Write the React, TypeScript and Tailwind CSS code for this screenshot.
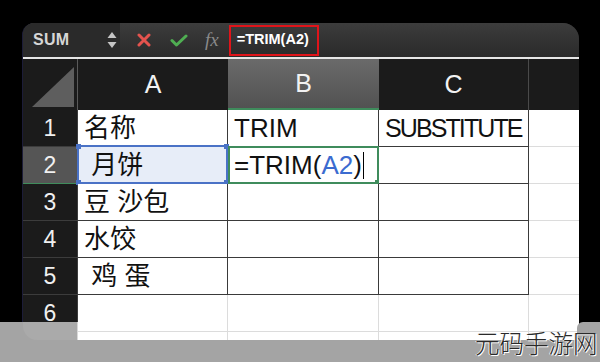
import React from 'react';

const LATIN = { fontFamily: '"Liberation Sans", Arial, sans-serif' };
const CJK = { fontFamily: '"Liberation Sans", "Noto Sans CJK SC", sans-serif' };

const DARK = 'border-r border-b border-[#3a3a3a]';
const LIGHT = 'border-r border-b border-[#dcdcdc]';

const COL_W = ['w-[150px]', 'w-[151px]', 'w-[150px]', 'w-[50px]'];

const rows: React.ReactNode[][] = [
  ['名称', 'TRIM', <span className="text-[25px] tracking-[-1.9px]">SUBSTITUTE</span>, ''],
  [' 月饼', 'formula', '', ''],
  ['豆 沙包', '', '', ''],
  ['水饺', '', '', ''],
  [' 鸡 蛋', '', '', ''],
  ['', '', '', ''],
];

function Handle({ className }: { className: string }) {
  return <span className={`absolute w-[5px] h-[5px] ${className}`} />;
}

function Toolbar() {
  return (
    <div className="h-[34px] flex items-center bg-linear-to-b from-[#3c3c3c] to-[#2a2a2a]">
      <div className="w-[97px] h-full flex items-center justify-between pl-[10px] pr-[3px] bg-[#2a2a2a]">
        <span className="text-[16px] font-semibold text-[#d6d6d6] tracking-[0.3px]" style={LATIN}>
          SUM
        </span>
        <svg width="10" height="18" viewBox="0 0 10 18">
          <path d="M5 1 L9.5 7 L0.5 7 Z" fill="#c4c4c4" />
          <path d="M5 17 L9.5 11 L0.5 11 Z" fill="#c4c4c4" />
        </svg>
      </div>
      <svg className="ml-[17px]" width="14" height="14" viewBox="0 0 14 14">
        <path d="M2 2 L12 12 M12 2 L2 12" stroke="#e4534e" strokeWidth="3" strokeLinecap="round" />
      </svg>
      <svg className="ml-[19px]" width="18" height="13" viewBox="0 0 18 13">
        <path d="M2 6.5 L6.5 11 L16 2" stroke="#4fae52" strokeWidth="3" fill="none" strokeLinecap="round" strokeLinejoin="round" />
      </svg>
      <span className="ml-[17px] text-[19px] italic text-[#8a8a8a]" style={{ fontFamily: '"Liberation Serif", serif' }}>
        fx
      </span>
      <div className="ml-[10px] w-[90px] h-[31px] border-2 border-[#e0141a] flex items-center pl-[6px]">
        <span className="text-[14.5px] font-semibold text-white" style={LATIN}>
          =TRIM(A2)
        </span>
      </div>
    </div>
  );
}

function Headers() {
  const cls = 'h-full flex items-center justify-center text-[25px] text-[#f2f2f2]';
  return (
    <div className="h-[51px] flex bg-[#1b1b1b]" style={LATIN}>
      <div className="w-[55px] h-full border-r border-[#5a5a5a] flex items-end justify-end pr-[3px] pb-[3px]">
        <svg width="42" height="40" viewBox="0 0 42 40">
          <path d="M0 40 L42 0 L42 40 Z" fill="#5e5e5e" />
        </svg>
      </div>
      <div className={`${COL_W[0]} ${cls}`}>A</div>
      <div className={`${COL_W[1]} ${cls} bg-linear-to-b from-[#6a6a6a] to-[#525252] border-b-2 border-[#3f8c5c]`}>B</div>
      <div className={`${COL_W[2]} ${cls} border-r border-[#4a4a4a]`}>C</div>
      <div className={`${COL_W[3]} ${cls}`} />
    </div>
  );
}

function CellBody({ value, c }: { value: React.ReactNode; c: number }) {
  if (value === 'formula') {
    return (
      <span className="flex items-center text-[26px] text-[#111]" style={LATIN}>
        =TRIM(<span className="text-[#3b6bd0]">A2</span>)
        <span className="ml-[1px] w-[1px] h-[27px] bg-black" />
      </span>
    );
  }
  const cjk = c === 0;
  return (
    <span className={`whitespace-pre text-[#111] text-[26px]`} style={cjk ? CJK : LATIN}>
      {value}
    </span>
  );
}

function Grid() {
  return (
    <div>
      {rows.map((row, r) => (
        <div key={r} className="h-[37px] flex">
          <div
            className={`w-[55px] h-full flex items-center justify-center text-[23px] text-[#f0f0f0] border-r border-b ${
              r === 1 ? 'bg-[#555555] border-[#3f8c5c]' : 'bg-[#1b1b1b] border-[#3c3c3c]'
            }`}
            style={LATIN}
          >
            {r + 1}
          </div>
          {row.map((value, c) => (
            <div
              key={c}
              className={`${COL_W[c]} h-full relative flex items-center pl-[6px] ${
                r < 5 && c < 3 ? DARK : LIGHT
              } ${c === 3 ? 'border-r-0' : ''} ${r === 1 && c === 0 ? 'bg-[#e7edf8]' : 'bg-white'}`}
            >
              <CellBody value={value} c={c} />
              {r === 1 && c === 0 && (
                <div className="absolute -left-px -top-[2px] -right-px -bottom-px border-2 border-[#4a72c6]">
                  <Handle className="-left-[3px] -top-[3px] bg-[#4a72c6]" />
                  <Handle className="-right-[3px] -top-[3px] bg-[#4a72c6]" />
                  <Handle className="-left-[3px] -bottom-[3px] bg-[#4a72c6]" />
                  <Handle className="-right-[3px] -bottom-[3px] bg-[#4a72c6]" />
                </div>
              )}
              {r === 1 && c === 1 && (
                <div className="absolute left-0 -top-px -right-px -bottom-px border-2 border-[#3f8c5c]">
                  <Handle className="-right-[3px] -bottom-[3px] bg-[#3f8c5c]" />
                </div>
              )}
            </div>
          ))}
        </div>
      ))}
      <div className="h-[8px] flex">
        <div className="w-[55px] h-full bg-[#1b1b1b] border-r border-[#3c3c3c]" />
        <div className={`${COL_W[0]} h-full bg-white border-r border-[#dcdcdc]`} />
        <div className={`${COL_W[1]} h-full bg-white border-r border-[#dcdcdc]`} />
        <div className={`${COL_W[2]} h-full bg-white border-r border-[#dcdcdc]`} />
        <div className={`${COL_W[3]} h-full bg-white`} />
      </div>
    </div>
  );
}

export default function App() {
  return (
    <div className="w-[600px] h-[362px] bg-black relative overflow-hidden pt-[23px] pl-[22px]">
      <div className="w-[557px] h-[317px] rounded-tl-[12px] rounded-tr-[16px] rounded-bl-[14px] overflow-hidden border-l border-[#1c1c38] bg-[#1b1b1b]">
        <Toolbar />
        <div className="h-[2px] bg-[#e6e6e6]" />
        <Headers />
        <Grid />
      </div>

      {/* grey strip along the bottom (watermark band) */}
      <div className="absolute left-0 top-[322px] w-[78px] h-[18px] bg-[#a4a4a4]">
        <div className="ml-[23px] h-full rounded-bl-[14px] bg-[#aaaaaa] border-r border-[#d8d8d8]" />
      </div>
      <div className="absolute right-0 top-[322px] w-[23px] h-[18px] bg-[#a4a4a4] rounded-tl-[6px]" />
      <div className="absolute left-0 right-0 bottom-0 h-[22px] bg-[#a4a4a4]" />
      <div
        className="absolute left-[475px] top-[331px] whitespace-nowrap text-[24.5px] leading-none font-light text-[#2a2a2a]"
        style={{ fontFamily: '"Noto Sans CJK SC", sans-serif', textShadow: '1px 1px 0 #fff, -1px 0 0 #eee' }}
      >
        元码手游网
      </div>
    </div>
  );
}
